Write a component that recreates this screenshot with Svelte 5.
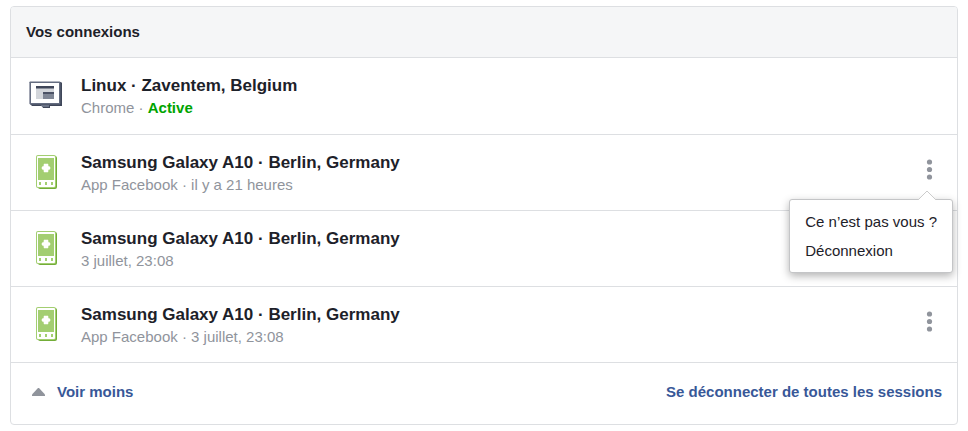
<script>
  const sessions = [
    { id: 1, device: "desktop", title: "Linux · Zaventem, Belgium", detail: "Chrome", active: true },
    { id: 2, device: "phone", title: "Samsung Galaxy A10 · Berlin, Germany", detail: "App Facebook · il y a 21 heures" },
    { id: 3, device: "phone", title: "Samsung Galaxy A10 · Berlin, Germany", detail: "3 juillet, 23:08" },
    { id: 4, device: "phone", title: "Samsung Galaxy A10 · Berlin, Germany", detail: "App Facebook · 3 juillet, 23:08" },
  ];

  let openMenu = 2;

  function toggleMenu(id) {
    openMenu = openMenu === id ? null : id;
  }
</script>

<section class="card">
  <header>
    <h2>Vos connexions</h2>
  </header>

  <ul class="sessions">
    {#each sessions as session (session.id)}
      <li class="session" class:current={session.active}>
        <div class="device">
          {#if session.device === "desktop"}
            <svg width="34" height="28" viewBox="0 0 34 28" aria-hidden="true">
              <path d="M2 1h30l1 1v23H21v2h-7l-1-2H3l-2-2z" fill="#3f4659" />
              <path d="M12 24h8v2h-7z" fill="#6b7386" />
              <rect x=".4" y=".4" width="31" height="23" rx=".8" fill="#646c80" />
              <path d="M2 2h28v20H2z" fill="#fff" />
              <path d="M7 5h18v13H7z" fill="#d3d6db" />
              <path d="M7 5h18v2.5H7z" fill="#3f4659" />
              <path d="M14 11h11v7H14z" fill="#7f8695" />
              <path d="M14 11h11v2H14z" fill="#4b5265" />
            </svg>
          {:else}
            <svg width="24" height="36" viewBox="0 0 24 36" aria-hidden="true">
              <rect x="4" y="2" width="19" height="33" rx="2" fill="#73ad38" />
              <rect x="2" y="1" width="20" height="33" rx="2" fill="#a3ce71" />
              <rect x="3" y="2" width="18" height="31" rx="1" fill="#fff" />
              <path d="M4 4h16v22H4z" fill="#a3ce71" />
              <path
                d="M10 10h4v2l2 1v2l-2 1v2h-4v-2l-2-1v-2l2-1z"
                fill="#fff"
                stroke="#fff"
                stroke-width="1"
                stroke-linejoin="round"
                stroke-opacity=".5"
              />
              <path d="M5 28h2v3H5zM11 28h2v3h-2zM17 28h2v3h-2z" fill="#a3ce71" />
            </svg>
          {/if}
        </div>

        <div class="info">
          <h3>{session.title}</h3>
          <p>
            {session.detail}{#if session.active}&nbsp;· <strong>Active</strong>{/if}
          </p>
        </div>

        {#if !session.active}
          <div class="actions">
            <button
              class="more"
              aria-label="Options"
              aria-expanded={openMenu === session.id}
              on:click={() => toggleMenu(session.id)}
            >
              <svg width="7" height="22" viewBox="0 0 7 22" aria-hidden="true">
                <circle cx="3.5" cy="3" r="2.6" />
                <circle cx="3.5" cy="10.500" r="2.6" />
                <circle cx="3.5" cy="18" r="2.6" />
              </svg>
            </button>
            {#if openMenu === session.id}
              <div class="menu">
                <svg class="arrow" width="18" height="10" viewBox="0 0 18 10" aria-hidden="true">
                  <path d="M0 10 9 1l9 9" fill="#fff" stroke="#ccc" />
                </svg>
                <button>Ce n’est pas vous ?</button>
                <button>Déconnexion</button>
              </div>
            {/if}
          </div>
        {/if}
      </li>
    {/each}
  </ul>

  <footer>
    <button class="link">
      <svg width="14" height="8" viewBox="0 0 14 8" aria-hidden="true">
        <path d="M7 0h1l6 6.500V8H1V6.500z" fill="#90949c" />
      </svg>
      Voir moins
    </button>
    <button class="link">Se déconnecter de toutes les sessions</button>
  </footer>
</section>

<style>
  :global(body) {
    margin: 0;
    background: #fff;
  }

  .card {
    margin: 6px 10px;
    border: 1px solid #dddfe2;
    border-radius: 4px;
    background: #fff;
    color: #1d2129;
    font-family: "Liberation Sans", Arial, sans-serif;
    font-size: 15px;
  }

  h2,
  h3,
  p,
  ul {
    margin: 0;
    padding: 0;
  }

  button {
    border: none;
    background: none;
    padding: 0;
    color: inherit;
    font: inherit;
    cursor: pointer;
  }

  header {
    padding: 14px 15px;
    border-bottom: 1px solid #dddfe2;
    border-radius: 3px 3px 0 0;
    background: #f5f6f7;
  }

  h2 {
    font-size: 15px;
    line-height: 22px;
  }

  .sessions {
    list-style: none;
  }

  .session {
    display: flex;
    align-items: center;
    gap: 15px;
    padding: 15px 15px 16px;
    border-bottom: 1px solid #dddfe2;
  }

  .current {
    padding-bottom: 17px;
  }

  .device {
    display: flex;
    justify-content: center;
    width: 40px;
  }

  .info {
    flex: 1;
  }

  h3 {
    font-size: 17px;
    line-height: 26px;
  }

  p {
    color: #90949c;
    line-height: 18px;
  }

  strong {
    color: #00a400;
  }

  .actions {
    position: relative;
    align-self: flex-start;
  }

  .more {
    display: flex;
    justify-content: center;
    width: 25px;
    padding: 9px 0;
    fill: #90949c;
  }

  .menu {
    position: absolute;
    z-index: 1;
    top: 49px;
    right: -11px;
    padding: 7px 0;
    border: 1px solid #c4c5c7;
    border-radius: 3px;
    background: #fff;
    box-shadow: 0 3px 8px rgba(0, 0, 0, 0.3);
  }

  .arrow {
    position: absolute;
    top: -10px;
    right: 16px;
  }

  .menu button {
    display: block;
    width: 100%;
    padding: 4px 15px;
    line-height: 21px;
    text-align: left;
    white-space: nowrap;
  }

  footer {
    display: flex;
    justify-content: space-between;
    padding: 18px 15px 21px;
  }

  .link {
    display: flex;
    align-items: center;
    gap: 12px;
    color: #385898;
    font-weight: bold;
    line-height: 22px;
  }

  .link svg {
    margin-left: 5px;
  }
</style>
